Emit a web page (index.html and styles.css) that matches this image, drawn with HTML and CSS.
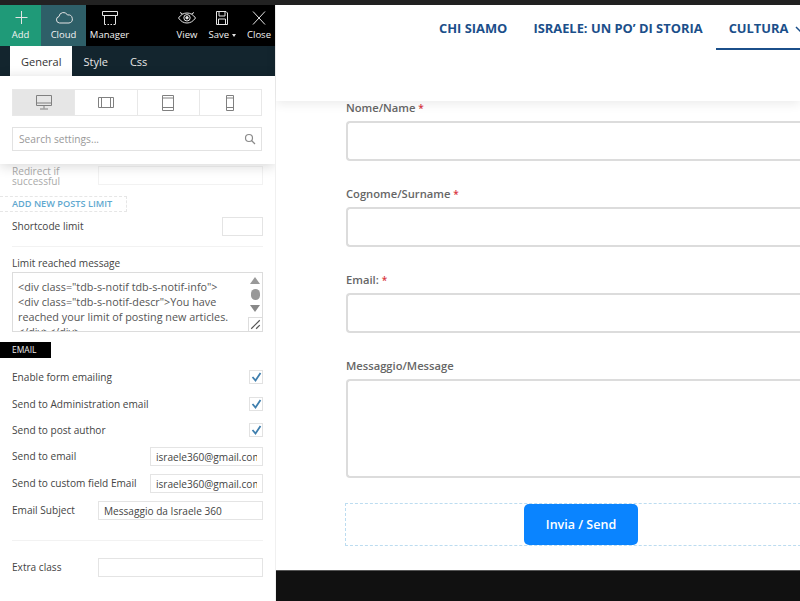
FILE: index.html
```html
<!DOCTYPE html>
<html lang="en">
<head>
    <meta charset="UTF-8">
    <meta name="viewport" content="width=device-width, initial-scale=1.0">
    <title>Form settings</title>
    <link rel="stylesheet" href="styles.css">
</head>
<body>
    <div class="page">
        <aside class="sidebar">
            <div class="toolbar">
                <a class="tool tool-add" href="#">
                    <svg width="20" height="20" viewBox="0 0 20 20"><path d="M10.500 3v13M4.500 9.500h12" /></svg>
                    Add
                </a>
                <a class="tool tool-cloud" href="#">
                    <svg width="20" height="20" viewBox="0 0 20 20"><path d="M5.500 15a3.300 3.300 0 0 1-.5-6.500A4.500 4.500 0 0 1 13.500 7a4 4 0 0 1 1.500 8z" /></svg>
                    Cloud
                </a>
                <a class="tool tool-manager" href="#">
                    <svg width="20" height="20" viewBox="0 0 20 20"><path d="M2.500 3.500h15v4h-15zM4.500 7.500v9M15.500 7.500v9" /><path class="dotted" d="M4.500 16.500h11" /></svg>
                    Manager
                </a>
                <span class="tool-gap"></span>
                <a class="tool tool-view" href="#">
                    <svg width="20" height="20" viewBox="0 0 20 20"><path d="M1.500 10c2.500-3.500 5.200-5 8.500-5s6 1.500 8.500 5c-2.500 3.500-5.200 5-8.500 5s-6-1.500-8.500-5zM3 4.500l2.500 1.500M17 4.500l-2.500 1.500" /><circle cx="10" cy="9.800" r="3.200" /><circle class="solid" cx="10" cy="9.800" r="1.200" /></svg>
                    View
                </a>
                <a class="tool tool-save" href="#">
                    <svg width="20" height="20" viewBox="0 0 20 20"><path d="M4.500 3.500h9.500l1.500 1.500v11.500h-11zM7 3.500v4.500h6v-4.500M6.500 16.500v-5.500h7v5.500" /></svg>
                    <span>Save <i class="caret"></i></span>
                </a>
                <a class="tool tool-close" href="#">
                    <svg width="20" height="20" viewBox="0 0 20 20"><path d="M4 3.500l12 13M16 3.500l-12 13" /></svg>
                    Close
                </a>
            </div>
            <div class="tabs">
                <a class="tab active" href="#">General</a>
                <a class="tab" href="#">Style</a>
                <a class="tab" href="#">Css</a>
            </div>
            <div class="panel-head">
                <div class="devices">
                    <a class="device active" href="#">
                        <svg width="18" height="17" viewBox="0 0 18 17"><path d="M1.500 1.500h15v10h-15zM1.500 9h15M9 11.500v3M5 15h8" /></svg>
                    </a>
                    <a class="device" href="#">
                        <svg width="18" height="13" viewBox="0 0 18 13"><path d="M1.500 1.500h15v10h-15zM4.500 1.500v10M13.500 1.500v10" /></svg>
                    </a>
                    <a class="device" href="#">
                        <svg width="14" height="18" viewBox="0 0 14 18"><path d="M1.500 1.500h11v15h-11zM1.500 4h11M1.500 13.500h11" /></svg>
                    </a>
                    <a class="device" href="#">
                        <svg width="10" height="18" viewBox="0 0 10 18"><path d="M1.500 1.500h7v15h-7zM1.500 4h7M1.500 13.500h7" /></svg>
                    </a>
                </div>
                <div class="search">
                    <span>Search settings...</span>
                    <svg width="12" height="12" viewBox="0 0 12 12"><circle cx="5" cy="5" r="3.500" /><path d="M7.500 7.500l3.500 3.500" /></svg>
                </div>
            </div>
            <div class="settings">
                <div class="row row-redirect">
                    <label class="faded">Redirect if successful</label>
                    <input class="field field-wide faded-field" type="text">
                </div>
                <div class="add-limit"><a href="#">ADD NEW POSTS LIMIT</a></div>
                <div class="row row-shortcode">
                    <label>Shortcode limit</label>
                    <input class="field field-small" type="text">
                </div>
                <hr class="divider">
                <label class="block-label">Limit reached message</label>
                <div class="code-box">
                    <p>&lt;div class="tdb-s-notif tdb-s-notif-info"&gt;<br>&lt;div class="tdb-s-notif-descr"&gt;You have<br>reached your limit of posting new articles.<br>&lt;/div&gt;&lt;/div&gt;</p>
                    <div class="code-scroll">
                        <i class="arrow-up"></i>
                        <i class="thumb"></i>
                        <i class="arrow-down"></i>
                    </div>
                    <svg class="grip" width="9" height="9" viewBox="0 0 9 9"><path d="M1 8l7-7M5 8l3-3" /></svg>
                </div>
                <div class="section-tag">EMAIL</div>
                <div class="row row-check">
                    <label>Enable form emailing</label>
                    <span class="check"><svg width="11" height="10" viewBox="0 0 11 10"><path d="M1.500 5l3 3.500 5-7.500" /></svg></span>
                </div>
                <div class="row row-check">
                    <label>Send to Administration email</label>
                    <span class="check"><svg width="11" height="10" viewBox="0 0 11 10"><path d="M1.500 5l3 3.500 5-7.500" /></svg></span>
                </div>
                <div class="row row-check">
                    <label>Send to post author</label>
                    <span class="check"><svg width="11" height="10" viewBox="0 0 11 10"><path d="M1.500 5l3 3.500 5-7.500" /></svg></span>
                </div>
                <div class="row row-input row-first">
                    <label>Send to email</label>
                    <input class="field field-mid" type="text" value="israele360@gmail.com">
                </div>
                <div class="row row-input">
                    <label>Send to custom field Email</label>
                    <input class="field field-mid" type="text" value="israele360@gmail.com">
                </div>
                <div class="row row-input">
                    <label>Email Subject</label>
                    <input class="field field-wide" type="text" value="Messaggio da Israele 360">
                </div>
                <hr class="divider divider-low">
                <div class="row row-input row-last">
                    <label>Extra class</label>
                    <input class="field field-wide" type="text">
                </div>
            </div>
        </aside>

        <main class="site">
            <nav class="site-nav">
                <a href="#">CHI SIAMO</a>
                <a href="#">ISRAELE: UN PO’ DI STORIA</a>
                <a class="current" href="#">CULTURA <svg width="10" height="7" viewBox="0 0 10 7"><path d="M1 1l4 4 4-4" /></svg></a>
            </nav>
            <form class="contact">
                <label>Nome/Name <em>*</em></label>
                <div class="input"></div>
                <label>Cognome/Surname <em>*</em></label>
                <div class="input"></div>
                <label>Email: <em>*</em></label>
                <div class="input"></div>
                <label>Messaggio/Message</label>
                <div class="input input-area"></div>
                <div class="send-row">
                    <button class="send" type="button">Invia / Send</button>
                </div>
            </form>
            <footer class="site-footer"></footer>
        </main>
    </div>
</body>
</html>
```

FILE: styles.css
```css
* {
    box-sizing: border-box;
}
html, body {
    height: 100%;
}
body {
    margin: 0;
    background-color: #fff;
    font-family: "Open Sans", "Liberation Sans", sans-serif;
    overflow: hidden;
}
a {
    text-decoration: none;
}
.page {
    display: flex;
    height: 601px;
    border-top: 5px solid #222;
}

/* left builder panel */
.sidebar {
    width: 276px;
    flex-shrink: 0;
    background-color: #fff;
    border-right: 1px solid #f0f0f0;
    overflow: hidden;
}
.toolbar {
    display: flex;
    height: 41px;
    background-color: #000;
}
.tool {
    display: flex;
    flex-direction: column;
    align-items: center;
    padding-top: 3px;
    color: #f2f2f2;
    font-size: 9.5px;
    line-height: 13px;
}
.tool svg {
    fill: none;
    stroke: #e4e4e4;
    stroke-width: 1;
}
.tool svg .solid {
    fill: #e4e4e4;
}
.tool svg .dotted {
    stroke-dasharray: 1.5 1.5;
}
.tool-add {
    width: 41px;
    background-color: #1f9a78;
}
.tool-cloud {
    width: 45px;
    background-color: #2e5f68;
}
.tool-manager {
    width: 47px;
}
.tool-gap {
    flex: 1;
}
.tool-view {
    width: 34px;
}
.tool-save {
    width: 36px;
    margin-right: 3px;
}
.tool-close {
    width: 32px;
}
.caret {
    display: inline-block;
    border-top: 3px solid #e4e4e4;
    border-left: 2px solid transparent;
    border-right: 2px solid transparent;
    vertical-align: middle;
}
.tabs {
    display: flex;
    height: 30px;
    padding-left: 10px;
    background-color: #13252e;
}
.tab {
    padding: 0 11px;
    color: #e6e6e6;
    font-size: 11px;
    line-height: 31px;
}
.tab.active {
    background-color: #fff;
    color: #333;
}
.panel-head {
    position: relative;
    z-index: 2;
    height: 88px;
    padding: 13px 13px 0 12px;
    background-color: #fff;
    box-shadow: 0 2px 12px rgba(0, 0, 0, 0.16);
}
.devices {
    display: flex;
    height: 27px;
    border: 1px solid #e8e8e8;
}
.device {
    flex: 1;
    display: flex;
    align-items: center;
    justify-content: center;
    border-left: 1px solid #e8e8e8;
}
.device:first-child {
    border-left: none;
}
.device.active {
    background-color: #e6e6e6;
}
.device svg {
    fill: none;
    stroke: #808080;
    stroke-width: 1;
}
.search {
    display: flex;
    align-items: center;
    justify-content: space-between;
    height: 24px;
    margin-top: 11px;
    padding: 0 5px 0 6px;
    border: 1px solid #e2e2e2;
    color: #999;
    font-size: 10.2px;
}
.search svg {
    fill: none;
    stroke: #8a8a8a;
    stroke-width: 1.2;
}

/* setting rows */
.settings {
    padding: 0 12px;
    color: #444;
    font-size: 10.1px;
}
.row {
    display: flex;
    align-items: center;
    justify-content: space-between;
}
.row-redirect {
    height: 23px;
}
.row-redirect label {
    width: 70px;
    line-height: 10px;
}
.faded {
    color: #aaa;
}
.field {
    height: 19px;
    margin: 0;
    padding: 0 5px;
    border: 1px solid #e4e4e4;
    border-radius: 0;
    outline: none;
    color: #444;
    font-family: inherit;
    font-size: 10.1px;
}
.field-wide {
    width: 165px;
}
.field-mid {
    width: 113px;
}
.field-small {
    width: 41px;
}
.faded-field {
    border-color: #f2f2f2;
}
.add-limit {
    width: 127px;
    height: 16px;
    margin: 9px 0 0 -12px;
    padding-left: 12px;
    border: 1px dashed #e6e6e6;
    border-left: none;
    font-size: 9.2px;
    font-weight: 600;
    line-height: 14px;
}
.add-limit a {
    color: #5fa8cf;
}
.row-shortcode {
    height: 18px;
    margin-top: 5px;
}
.divider {
    height: 1px;
    margin: 11px 0 0;
    border: none;
    background-color: #f2f2f2;
}
.divider-low {
    margin: 20px 0 0;
}
.block-label {
    display: block;
    height: 15px;
    margin-top: 9px;
    line-height: 15px;
}
.code-box {
    position: relative;
    height: 60px;
    margin-top: 1px;
    padding: 6px 18px 0 5px;
    overflow: hidden;
    border: 1px solid #dcdcdc;
    color: #555;
    font-size: 10.8px;
    line-height: 15px;
    white-space: nowrap;
}
.code-box p {
    margin: 0;
}
.code-scroll {
    position: absolute;
    top: 4px;
    right: 2px;
    display: flex;
    flex-direction: column;
    align-items: center;
    gap: 5px;
    width: 10px;
}
.arrow-up {
    border-bottom: 7px solid #999;
    border-left: 5px solid transparent;
    border-right: 5px solid transparent;
}
.arrow-down {
    border-top: 7px solid #888;
    border-left: 5px solid transparent;
    border-right: 5px solid transparent;
}
.thumb {
    width: 9px;
    height: 11px;
    border-radius: 5px;
    background-color: #999;
}
.grip {
    position: absolute;
    right: 0;
    bottom: 0;
    padding: 1px;
    width: 14px;
    height: 14px;
    border-left: 1px solid #ddd;
    border-top: 1px solid #ddd;
    background-color: #fff;
    fill: none;
    stroke: #555;
    stroke-width: 1;
}
.section-tag {
    width: 51px;
    height: 16px;
    margin: 10px 0 0 -12px;
    padding-left: 12px;
    background-color: #000;
    color: #eee;
    font-size: 8.5px;
    line-height: 16px;
}
.row-check {
    height: 15px;
    margin-top: 11.5px;
}
.check {
    display: flex;
    align-items: center;
    justify-content: center;
    width: 14px;
    height: 14px;
    border: 1px solid #e2e2e2;
}
.check svg {
    fill: none;
    stroke: #3f7fae;
    stroke-width: 1.8;
}
.row-input {
    height: 19px;
    margin-top: 8px;
}
.row-input label {
    margin-bottom: 2px;
}
.row-first {
    margin-top: 9.5px;
}
.row-last {
    margin-top: 17px;
}

/* site behind the panel */
.site {
    flex: 1;
    min-width: 0;
    display: flex;
    flex-direction: column;
}
.site-nav {
    position: relative;
    display: flex;
    height: 96px;
    padding-left: 150px;
    box-shadow: 0 3px 10px rgba(0, 0, 0, 0.08);
    white-space: nowrap;
}
.site-nav a {
    height: 45px;
    padding: 0 13px;
    color: #1b4f8a;
    font-size: 12.9px;
    font-weight: 700;
    line-height: 47px;
}
.site-nav .current {
    border-bottom: 2px solid #1b4f8a;
}
.site-nav svg {
    margin-left: 3px;
    fill: none;
    stroke: #1b4f8a;
    stroke-width: 1.5;
}
.contact {
    flex: 1;
    display: flex;
    flex-direction: column;
    width: 540px;
    padding-left: 70px;
}
.contact label {
    height: 20px;
    color: #666;
    font-size: 11.2px;
    font-weight: 600;
    line-height: 14px;
}
.contact em {
    color: #d9363e;
    font-size: 10px;
    font-style: normal;
}
.input {
    flex-shrink: 0;
    height: 40px;
    margin-bottom: 26px;
    border: 2px solid #dcdcdc;
    border-right: none;
    border-radius: 4px 0 0 4px;
}
.input-area {
    height: 99px;
    margin-bottom: 25px;
}
.send-row {
    display: flex;
    justify-content: center;
    height: 43px;
    margin-left: -1px;
    border: 1px dashed #bcdcf0;
    border-right: none;
}
.send {
    width: 114px;
    height: 41px;
    border: none;
    border-radius: 5px;
    background-color: #0a84ff;
    color: #fff;
    font-family: inherit;
    font-size: 12.5px;
    font-weight: 600;
}
.site-footer {
    height: 31px;
    flex-shrink: 0;
    background-color: #111;
    border-top: 1px solid #555;
}
```
